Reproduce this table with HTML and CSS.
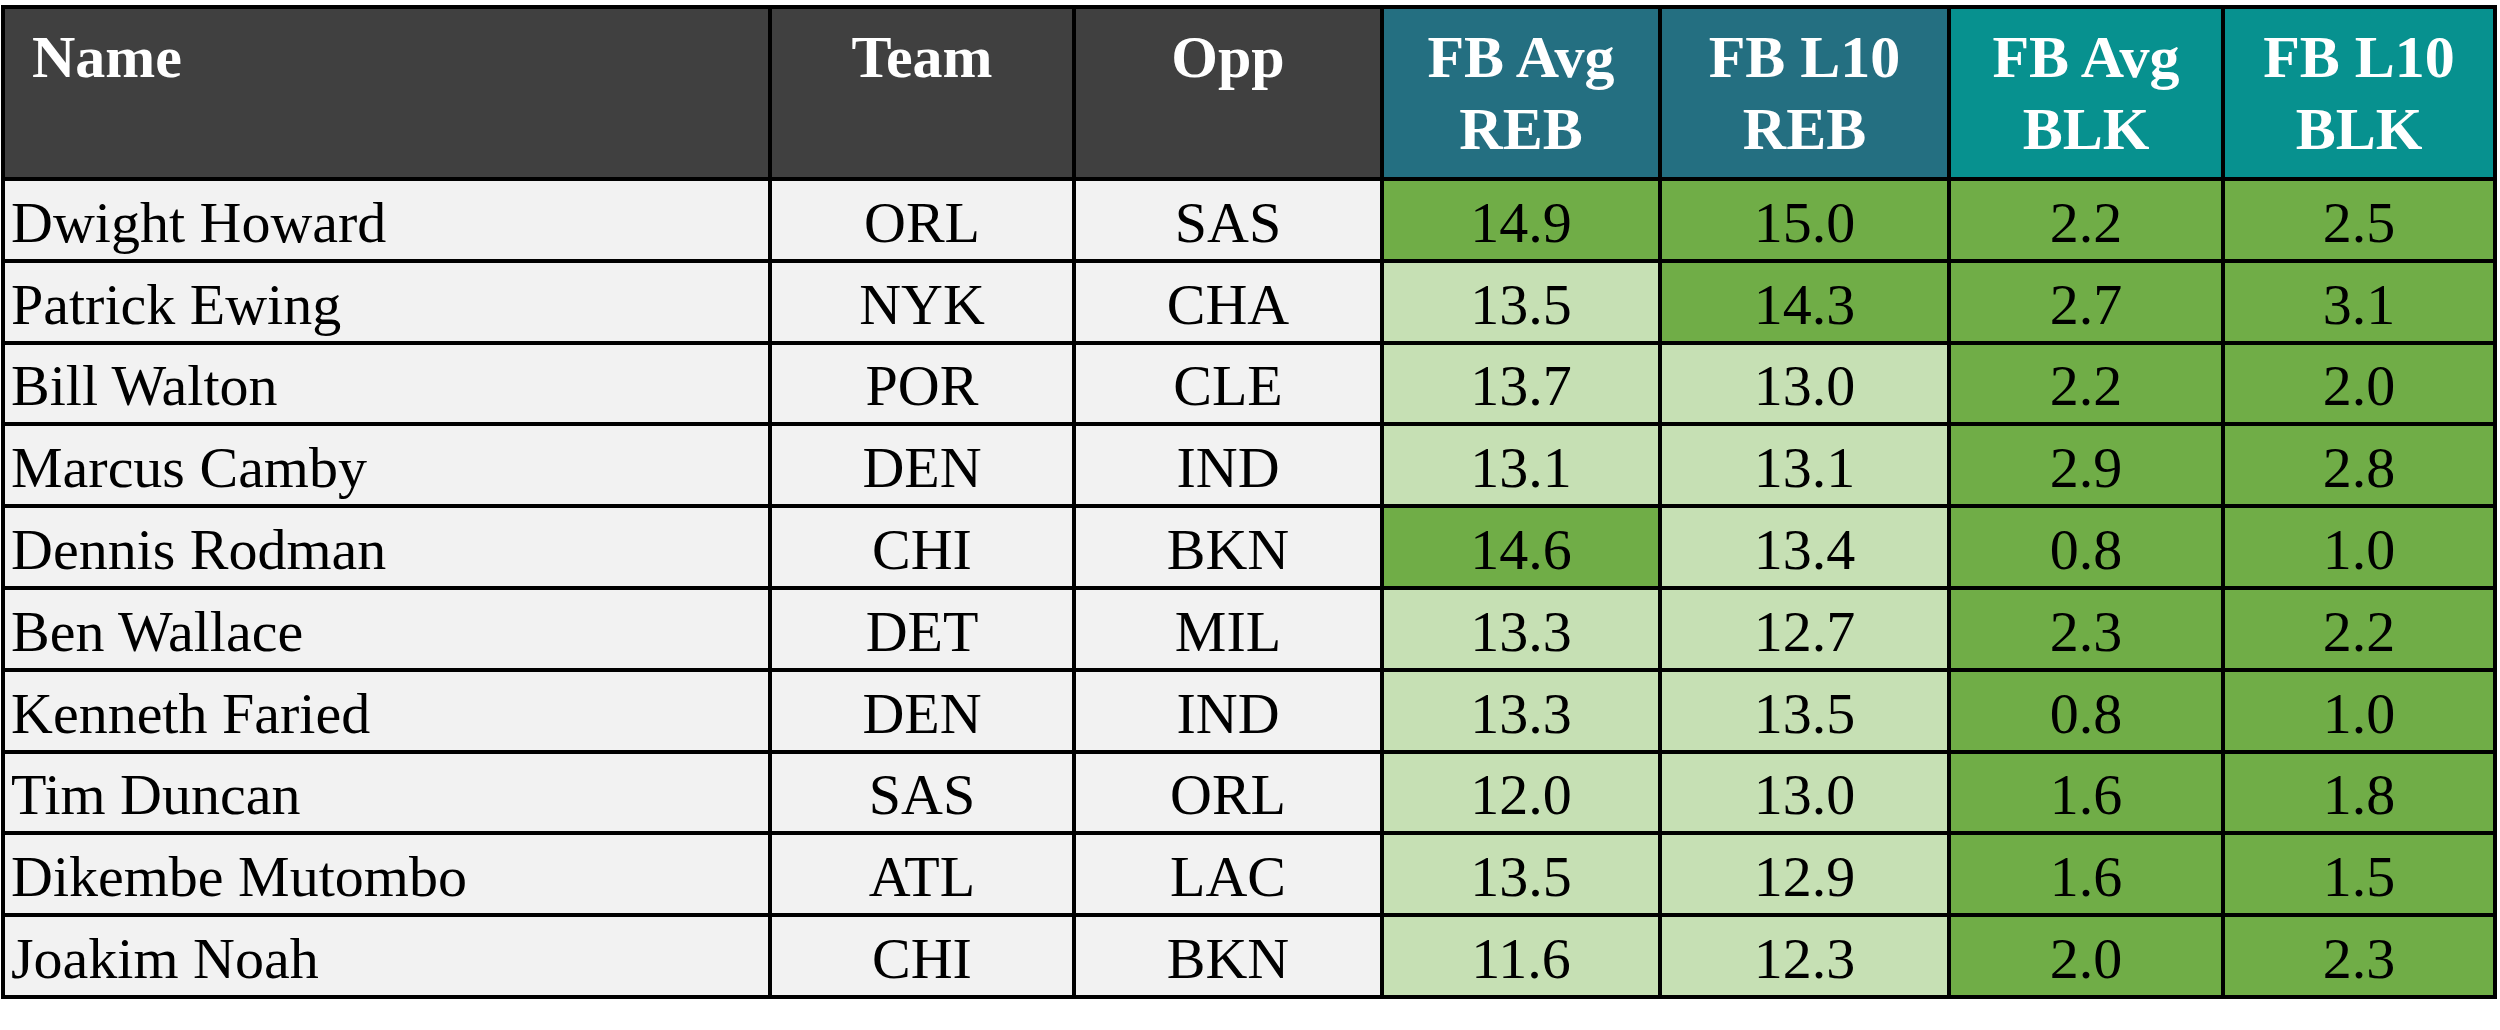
FILE: index.html
```html
<!DOCTYPE html>
<html lang="en">
<head>
<meta charset="utf-8">
<title>FB Rebounds and Blocks</title>
<link rel="stylesheet" href="styles.css">
</head>
<body>
<div class="table">
  <div class="hd dark left">Name</div>
  <div class="hd dark">Team</div>
  <div class="hd dark">Opp</div>
  <div class="hd reb">FB Avg<br>REB</div>
  <div class="hd reb">FB L10<br>REB</div>
  <div class="hd blk">FB Avg<br>BLK</div>
  <div class="hd blk">FB L10<br>BLK</div>

  <div class="cell name">Dwight Howard</div><div class="cell">ORL</div><div class="cell">SAS</div>
  <div class="cell dg">14.9</div><div class="cell dg">15.0</div><div class="cell dg">2.2</div><div class="cell dg">2.5</div>

  <div class="cell name">Patrick Ewing</div><div class="cell">NYK</div><div class="cell">CHA</div>
  <div class="cell lg">13.5</div><div class="cell dg">14.3</div><div class="cell dg">2.7</div><div class="cell dg">3.1</div>

  <div class="cell name">Bill Walton</div><div class="cell">POR</div><div class="cell">CLE</div>
  <div class="cell lg">13.7</div><div class="cell lg">13.0</div><div class="cell dg">2.2</div><div class="cell dg">2.0</div>

  <div class="cell name">Marcus Camby</div><div class="cell">DEN</div><div class="cell">IND</div>
  <div class="cell lg">13.1</div><div class="cell lg">13.1</div><div class="cell dg">2.9</div><div class="cell dg">2.8</div>

  <div class="cell name">Dennis Rodman</div><div class="cell">CHI</div><div class="cell">BKN</div>
  <div class="cell dg">14.6</div><div class="cell lg">13.4</div><div class="cell dg">0.8</div><div class="cell dg">1.0</div>

  <div class="cell name">Ben Wallace</div><div class="cell">DET</div><div class="cell">MIL</div>
  <div class="cell lg">13.3</div><div class="cell lg">12.7</div><div class="cell dg">2.3</div><div class="cell dg">2.2</div>

  <div class="cell name">Kenneth Faried</div><div class="cell">DEN</div><div class="cell">IND</div>
  <div class="cell lg">13.3</div><div class="cell lg">13.5</div><div class="cell dg">0.8</div><div class="cell dg">1.0</div>

  <div class="cell name">Tim Duncan</div><div class="cell">SAS</div><div class="cell">ORL</div>
  <div class="cell lg">12.0</div><div class="cell lg">13.0</div><div class="cell dg">1.6</div><div class="cell dg">1.8</div>

  <div class="cell name">Dikembe Mutombo</div><div class="cell">ATL</div><div class="cell">LAC</div>
  <div class="cell lg">13.5</div><div class="cell lg">12.9</div><div class="cell dg">1.6</div><div class="cell dg">1.5</div>

  <div class="cell name">Joakim Noah</div><div class="cell">CHI</div><div class="cell">BKN</div>
  <div class="cell lg">11.6</div><div class="cell lg">12.3</div><div class="cell dg">2.0</div><div class="cell dg">2.3</div>
</div>
</body>
</html>
```
FILE: styles.css
```css
html, body {
  margin: 0;
  background: #ffffff;
}

body {
  padding: 5px 0 0 1px;
  font-family: "Liberation Serif", "Times New Roman", serif;
}

.table {
  display: grid;
  width: max-content;
  grid-template-columns: 763px 300px 304px 274px 285px 270px 268px;
  grid-template-rows: 168px repeat(10, 77.8px);
  gap: 4px;
  padding: 4px;
  background: #000000;
}

.hd {
  color: #ffffff;
  font-weight: bold;
  font-size: 60px;
  line-height: 72px;
  text-align: center;
  padding-top: 12px;
  box-sizing: border-box;
}

.hd.left {
  text-align: left;
  padding-left: 27px;
}

.dark { background: #404040; }
.reb { background: #246f81; }
.blk { background: #07918f; }

.cell {
  display: flex;
  align-items: center;
  justify-content: center;
  background: #f2f2f2;
  color: #000000;
  font-size: 58px;
  padding-top: 5px;
  box-sizing: border-box;
  white-space: nowrap;
}

.cell.name {
  justify-content: flex-start;
  padding-left: 6px;
}

.dg { background: #70ad47; }
.lg { background: #c6e0b4; }
```
